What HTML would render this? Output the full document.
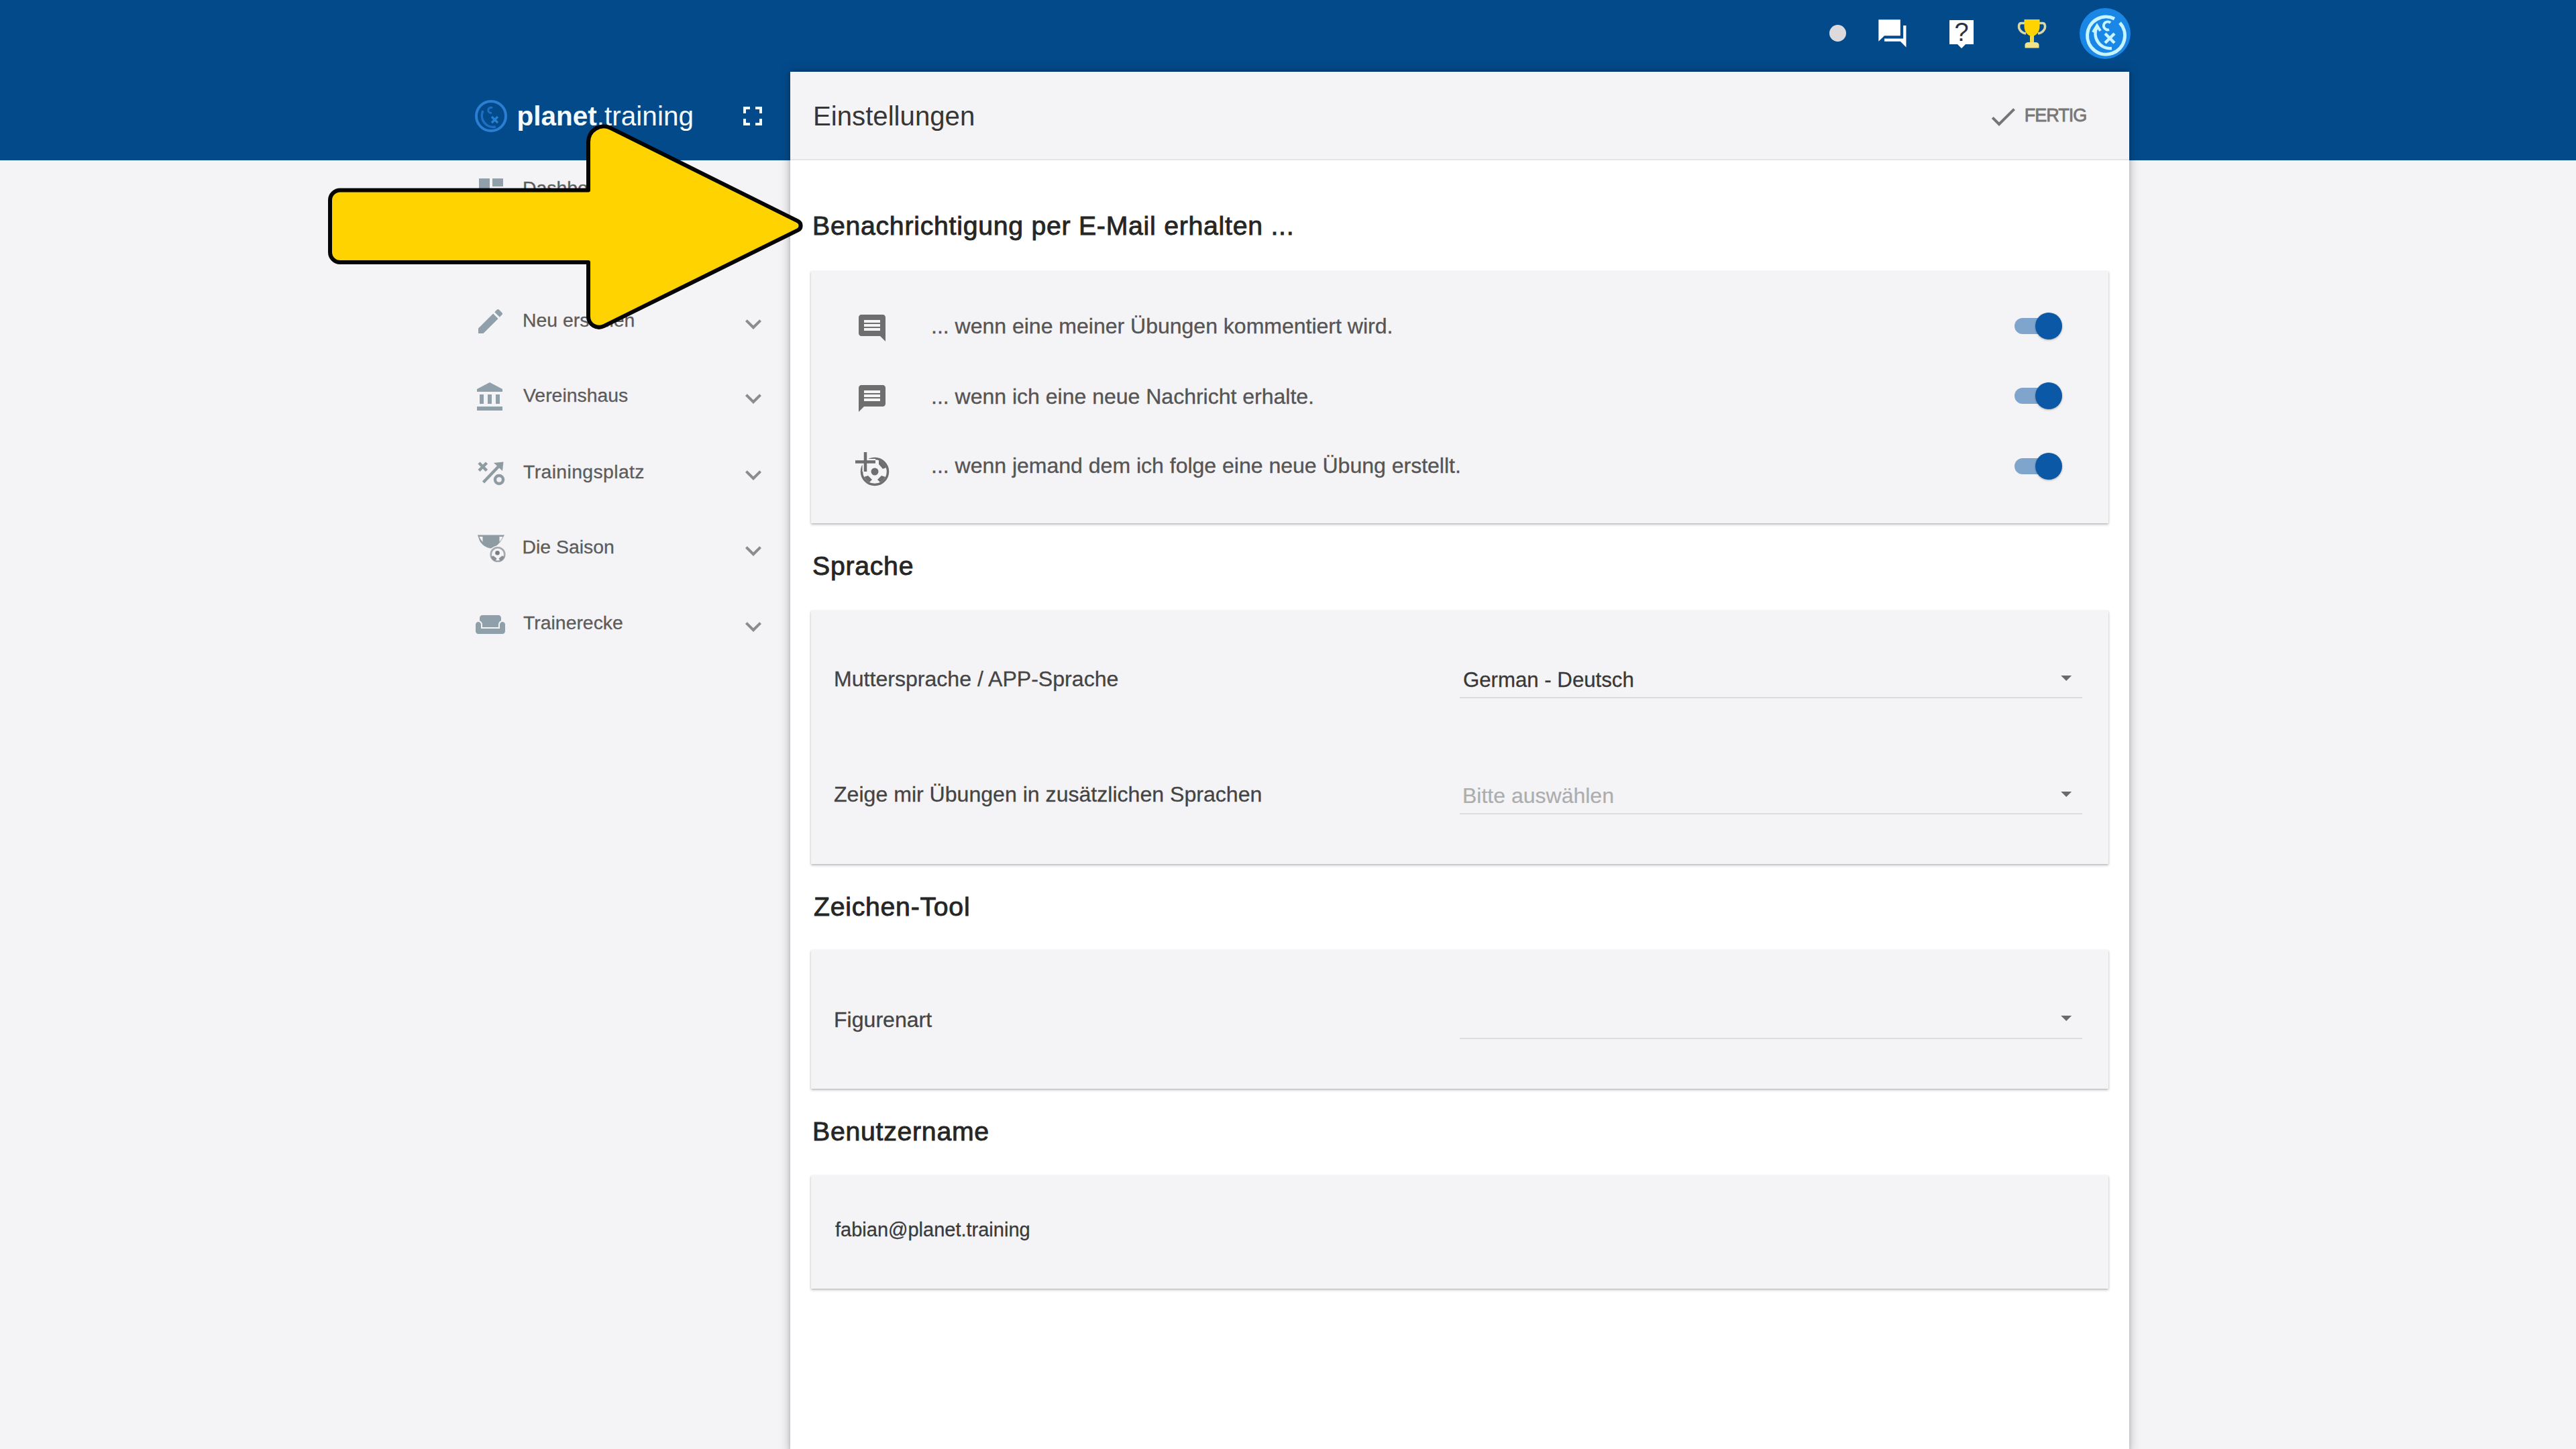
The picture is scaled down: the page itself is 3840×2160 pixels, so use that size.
<!DOCTYPE html>
<html><head><meta charset="utf-8">
<style>
html,body{margin:0;padding:0;width:3840px;height:2160px;overflow:hidden;background:#f4f3f6;font-family:"Liberation Sans",sans-serif;}
.t{position:absolute;white-space:nowrap;line-height:1;}
#topbar{position:absolute;left:0;top:0;width:3840px;height:239px;background:#034a8b;}
#panel{position:absolute;left:1178px;top:107px;width:1996px;height:2060px;background:#fff;box-shadow:0 0 16px rgba(0,0,0,.26),0 0 6px rgba(0,0,0,.16);}
#phead{position:absolute;left:0;top:0;width:1996px;height:130px;background:#f4f3f6;border-bottom:2px solid #e4e3e6;}
.card{position:absolute;left:31px;width:1934px;background:#f4f3f6;box-shadow:0 2px 4px rgba(0,0,0,.22),0 1px 2px rgba(0,0,0,.12);}
.h{font-size:39.2px;letter-spacing:0.75px;color:#262626;-webkit-text-stroke:0.9px #262626;left:33px;}
.row{font-size:32px;color:#555;-webkit-text-stroke:0.35px #555;left:210px;}
.lbl{font-size:32.1px;color:#444;-webkit-text-stroke:0.3px #444;left:65px;}
.side{font-size:28.4px;color:#5c5c5c;-webkit-text-stroke:0.3px #5c5c5c;}
.ul{position:absolute;left:998px;width:928px;height:2px;background:#dcdcde;}
svg{position:absolute;overflow:visible;}
.tg-track{position:absolute;left:1825px;width:66px;height:24px;border-radius:12px;background:#80a5cc;}
.tg-knob{position:absolute;left:1856px;width:40px;height:40px;border-radius:50%;background:#0b59a6;box-shadow:0 1px 3px rgba(0,0,0,.3);}
</style></head>
<body>
<div id="topbar"></div>

<!-- ===== top bar icons ===== -->
<div style="position:absolute;left:2726.5px;top:37px;width:25px;height:25px;border-radius:50%;background:#dcdadc;"></div>
<svg style="left:2795.7px;top:25px" width="52" height="52" viewBox="0 0 24 24"><path fill="#fff" d="M21 6h-2v9H6v2h11l4 4V6zm-4 6V2H2v15l4-4h11z"/></svg>
<svg style="left:2899.8px;top:26px" width="48" height="48" viewBox="0 0 24 24"><path fill="#fff" d="M21 2H3v18h6l3 3 3-3h6V2z"/></svg>
<div class="t" style="left:2913.5px;top:28.5px;font-size:38px;color:#2b3142;">?</div>
<svg style="left:3008px;top:29px" width="42" height="42" viewBox="0 0 42 42">
  <path d="M10 5.5H5C1 5.5 0.5 12 3 15.5C5 18.5 8 20.5 12 21" fill="none" stroke="#d6d8a8" stroke-width="3.6"/>
  <path d="M32 5.5H37C41 5.5 41.5 12 39 15.5C37 18.5 34 20.5 30 21" fill="none" stroke="#d6d8a8" stroke-width="3.6"/>
  <path fill="#ffd400" d="M9.5 0H32.5V10C32.5 18 28 24 21 25.5C14 24 9.5 18 9.5 10Z"/>
  <rect x="18" y="24" width="6" height="10" fill="#f0d94a"/>
  <path fill="#efe28a" d="M10.5 42.5V38C10.5 35.5 13 34 16 34H26C29 34 31.5 35.5 31.5 38V42.5Z"/>
</svg>
<svg style="left:3100px;top:12px" width="76" height="76" viewBox="0 0 76 76">
  <circle cx="38" cy="38" r="38" fill="#1a86e6"/>
  <path d="M52 16 A28 28 0 1 0 60 22" fill="none" stroke="#c8f4ff" stroke-width="5"/>
  <path d="M48 60 A22 22 0 0 1 26 28" fill="none" stroke="#c8f4ff" stroke-width="4.5"/>
  <path d="M20 36 L26 26 L31 34" fill="none" stroke="#c8f4ff" stroke-width="4"/>
  <path d="M46 22 A6 6 0 1 0 44 32" fill="none" stroke="#c8f4ff" stroke-width="4"/>
  <path d="M38 38 L52 52 M52 38 L38 52" stroke="#c8f4ff" stroke-width="4.5"/>
</svg>

<!-- ===== sidebar ===== -->
<svg style="left:708px;top:149px" width="48" height="48" viewBox="0 0 48 48">
  <circle cx="24" cy="24" r="22" fill="none" stroke="#2a7ed3" stroke-width="4"/>
  <path d="M31 40 A17 17 0 0 1 12 16" fill="none" stroke="#1e6fc4" stroke-width="3.5"/>
  <path d="M26 12 A4 4 0 1 0 25 19" fill="none" stroke="#1e6fc4" stroke-width="3"/>
  <path d="M25 25 L34 34 M34 25 L25 34" stroke="#2680d8" stroke-width="3.2"/>
</svg>
<div class="t" style="left:770.6px;top:152.8px;font-size:40.5px;color:#f4fbff;"><b>planet</b>.training</div>
<svg style="left:1098px;top:149px" width="48" height="48" viewBox="0 0 24 24"><path fill="#f4fbff" d="M7 14H5v5h5v-2H7v-3zm-2-4h2V7h3V5H5v5zm12 7h-3v2h5v-5h-2v3zM14 5v2h3v3h2V5h-5z"/></svg>

<svg style="left:707.6px;top:259.5px" width="48" height="48" viewBox="0 0 24 24"><path fill="#8fa0aa" d="M3 13h8V3H3v10zm0 8h8v-6H3v6zm10 0h8V11h-8v10zm0-18v6h8V3h-8z"/></svg>
<div class="t side" style="left:779px;top:266.3px;">Dashboard</div>

<svg style="left:706.6px;top:454.7px" width="48" height="48" viewBox="0 0 24 24"><path fill="#8fa0aa" d="M3 17.25V21h3.75L17.81 9.94l-3.75-3.75L3 17.25zM20.71 7.04c.39-.39.39-1.02 0-1.41l-2.34-2.34c-.39-.39-1.02-.39-1.41 0l-1.83 1.83 3.75 3.75 1.83-1.83z"/></svg>
<div class="t side" style="left:779px;top:463.0px;">Neu erstellen</div>
<svg style="left:1099px;top:458.8px" width="48" height="48" viewBox="0 0 24 24"><path fill="#8c8c8c" d="M16.59 8.59L12 13.17 7.41 8.59 6 10l6 6 6-6z"/></svg>

<svg style="left:707px;top:568px" width="48" height="48" viewBox="0 0 24 24"><path fill="#8fa0aa" d="M4 10v7h3v-7H4zm6 0v7h3v-7h-3zM2 22h19v-3H2v3zm14-12v7h3v-7h-3zm-4.5-9L2 6v2h19V6l-9.5-5z"/></svg>
<div class="t side" style="left:780px;top:574.5px;">Vereinshaus</div>
<svg style="left:1099px;top:570.3px" width="48" height="48" viewBox="0 0 24 24"><path fill="#8c8c8c" d="M16.59 8.59L12 13.17 7.41 8.59 6 10l6 6 6-6z"/></svg>

<svg style="left:711px;top:687px" width="40" height="40" viewBox="0 0 40 40">
  <path d="M3 3 L14.5 14.5 M14.5 3 L3 14.5" stroke="#8e9ba3" stroke-width="4.5"/>
  <path d="M9.5 32 L32 8.5" stroke="#8e9ba3" stroke-width="4.5"/>
  <path d="M25 3 L39.5 1.5 L38 15 Z" fill="#8e9ba3"/>
  <circle cx="33" cy="28" r="6" fill="none" stroke="#8e9ba3" stroke-width="4.5"/>
</svg>
<div class="t side" style="left:780px;top:689.0px;letter-spacing:0.37px;">Trainingsplatz</div>
<svg style="left:1099px;top:683.8px" width="48" height="48" viewBox="0 0 24 24"><path fill="#8c8c8c" d="M16.59 8.59L12 13.17 7.41 8.59 6 10l6 6 6-6z"/></svg>

<svg style="left:711px;top:797px" width="44" height="44" viewBox="0 0 44 44">
  <path d="M1 0.5H41L36 9C32 15 27 19 20 20.5C13 19 7 15 4 9Z" fill="#8e9ba3"/>
  <path d="M3.5 3 H8.5 V11 C6 8 4.5 5.5 3.5 3Z" fill="#f4f3f6"/>
  <path d="M38.5 3 H33.5 V11 C36 8 37.5 5.5 38.5 3Z" fill="#f4f3f6"/>
  <circle cx="31" cy="29.5" r="13" fill="#f4f3f6"/>
  <circle cx="31" cy="29.5" r="10.3" fill="none" stroke="#a3a9ad" stroke-width="2.6"/>
  <circle cx="30.5" cy="27.3" r="3.3" fill="#7a7d80"/>
  <path d="M21 33 A10.5 10.5 0 0 0 27 39.5 L29.5 35.5 L24.5 31.5 Z" fill="#8c9094"/>
  <path d="M41 33 A10.5 10.5 0 0 1 35 39.5 L32.5 35.5 L37.5 31.5 Z" fill="#8c9094"/>
</svg>
<div class="t side" style="left:778.5px;top:801.0px;">Die Saison</div>
<svg style="left:1099px;top:796.8px" width="48" height="48" viewBox="0 0 24 24"><path fill="#8c8c8c" d="M16.59 8.59L12 13.17 7.41 8.59 6 10l6 6 6-6z"/></svg>

<svg style="left:707.4px;top:907px" width="48" height="48" viewBox="0 0 24 24"><path fill="#8fa0aa" d="M21 10c-1.1 0-2 .9-2 2v3H5v-3c0-1.1-.89-2-2-2s-2 .9-2 2v5c0 1.1.9 2 2 2h18c1.1 0 2-.9 2-2v-5c0-1.1-.9-2-2-2zm-3-5H6c-1.1 0-2 .9-2 2v2.15c1.16.41 2 1.51 2 2.820V14h12v-2.03c0-1.3.84-2.4 2-2.82V7c0-1.1-.9-2-2-2z"/></svg>
<div class="t side" style="left:780px;top:913.8px;">Trainerecke</div>
<svg style="left:1099px;top:909.6px" width="48" height="48" viewBox="0 0 24 24"><path fill="#8c8c8c" d="M16.59 8.59L12 13.17 7.41 8.59 6 10l6 6 6-6z"/></svg>

<!-- ===== panel ===== -->
<div id="panel">
  <div id="phead">
    <div class="t" style="left:34px;top:47.2px;font-size:40.2px;color:#363636;">Einstellungen</div>
    <svg style="left:1784px;top:43px" width="48" height="48" viewBox="0 0 24 24"><path fill="#757575" d="M9 16.17L4.83 12l-1.42 1.41L9 19 21 7l-1.41-1.41z"/></svg>
    <div class="t" style="left:1839.7px;top:51.6px;font-size:27px;letter-spacing:-1px;color:#777;-webkit-text-stroke:0.8px #777;">FERTIG</div>
  </div>

  <div class="t h" style="top:210.4px;">Benachrichtigung per E-Mail erhalten ...</div>
  <div class="card" style="top:297px;height:376px;"></div>
  <svg style="left:98px;top:358px" width="48" height="48" viewBox="0 0 24 24"><path fill="#6e6e6e" d="M21.99 4c0-1.1-.89-2-1.99-2H4c-1.1 0-2 .9-2 2v12c0 1.1.9 2 2 2h14l4 4-.01-18zM18 14H6v-2h12v2zm0-3H6V9h12v2zm0-3H6V6h12v2z"/></svg>
  <div class="t row" style="top:362.7px;">... wenn eine meiner Übungen kommentiert wird.</div>
  <div class="tg-track" style="top:366.5px;"></div><div class="tg-knob" style="top:358.5px;"></div>

  <svg style="left:98px;top:462.7px" width="48" height="48" viewBox="0 0 24 24"><path fill="#6e6e6e" d="M20 2H4c-1.1 0-1.99.9-1.99 2L2 22l4-4h14c1.1 0 2-.9 2-2V4c0-1.1-.9-2-2-2zM6 9h12v2H6V9zm12 5H6v-2h12v2zm0-6H6V6h12v2z"/></svg>
  <div class="t row" style="top:467.5px;">... wenn ich eine neue Nachricht erhalte.</div>
  <div class="tg-track" style="top:471.0px;"></div><div class="tg-knob" style="top:463px;"></div>

  <svg style="left:96px;top:566px" width="56" height="56" viewBox="0 0 56 56">
    <circle cx="30" cy="30" r="19.5" fill="none" stroke="#6e6e6e" stroke-width="3.5"/>
    <circle cx="30" cy="30" r="5.5" fill="#6e6e6e"/>
    <path d="M36 13 A19 19 0 0 1 47 24 L42 26 L36 19 Z" fill="#6e6e6e"/>
    <path d="M14 38 A19 19 0 0 0 22 46 L26 42 L20 36 Z" fill="#6e6e6e"/>
    <path d="M46 38 A19 19 0 0 1 38 46 L34 42 L40 36 Z" fill="#6e6e6e"/>
    <path d="M16 1V30 M1 15.6H31" stroke="#f4f3f6" stroke-width="9"/>
    <path d="M16 1V30 M1 15.6H31" stroke="#6e6e6e" stroke-width="4.5"/>
  </svg>
  <div class="t row" style="top:571.4px;">... wenn jemand dem ich folge eine neue Übung erstellt.</div>
  <div class="tg-track" style="top:576.0px;"></div><div class="tg-knob" style="top:568px;"></div>

  <div class="t h" style="top:717.4px;">Sprache</div>
  <div class="card" style="top:803px;height:378px;"></div>
  <div class="t lbl" style="top:889.1px;">Muttersprache / APP-Sprache</div>
  <div class="t" style="left:1003px;top:891px;font-size:31.2px;color:#383838;-webkit-text-stroke:0.3px #383838;">German - Deutsch</div>
  <div class="ul" style="top:932px;"></div>
  <svg style="left:1883px;top:884px" width="38.4" height="38.4" viewBox="0 0 24 24"><path fill="#6a6a6a" d="M7 10l5 5 5-5z"/></svg>
  <div class="t lbl" style="top:1061.4px;">Zeige mir Übungen in zusätzlichen Sprachen</div>
  <div class="t" style="left:1002px;top:1063px;font-size:32px;color:#adadad;-webkit-text-stroke:0.2px #adadad;">Bitte auswählen</div>
  <div class="ul" style="top:1105px;"></div>
  <svg style="left:1883px;top:1057px" width="38.4" height="38.4" viewBox="0 0 24 24"><path fill="#6a6a6a" d="M7 10l5 5 5-5z"/></svg>

  <div class="t h" style="left:35px;top:1225.2px;">Zeichen-Tool</div>
  <div class="card" style="top:1309px;height:207px;"></div>
  <div class="t lbl" style="top:1396.7px;">Figurenart</div>
  <div class="ul" style="top:1440px;"></div>
  <svg style="left:1883px;top:1391px" width="38.4" height="38.4" viewBox="0 0 24 24"><path fill="#6a6a6a" d="M7 10l5 5 5-5z"/></svg>

  <div class="t h" style="top:1559.6px;">Benutzername</div>
  <div class="card" style="top:1645px;height:169px;"></div>
  <div class="t" style="left:67px;top:1712px;font-size:29px;color:#3a3a3a;-webkit-text-stroke:0.3px #3a3a3a;">fabian@planet.training</div>
</div>

<!-- ===== yellow arrow overlay ===== -->
<svg style="left:0;top:0" width="3840" height="2160" viewBox="0 0 3840 2160">
  <path d="M492.00 298.40 A15.00 15.00 0 0 1 507.00 283.40 L877.00 283.40 L877.00 211.42 A23.00 23.00 0 0 1 910.24 190.83 L1189.45 329.66 A7.50 7.50 0 0 1 1189.44 343.10 L900.09 486.09 A16.00 16.00 0 0 1 877.00 471.75 L877.00 391.00 L507.00 391.00 A15.00 15.00 0 0 1 492.00 376.00 Z" fill="#ffd300" stroke="#050505" stroke-width="6" stroke-linejoin="round"/>
</svg>

</body></html>
